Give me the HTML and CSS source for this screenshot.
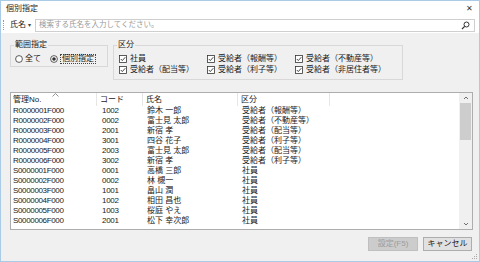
FILE: index.html
```html
<!doctype html>
<html>
<head>
    <meta charset="utf-8">
    <title>個別指定</title>
    <link rel="stylesheet" href="styles.css">
</head>

<body>

<div class="window">
    <div class="titlebar">
        <span class="title">個別指定</span>
        <span class="close">✕</span>
    </div>

    <div class="searchbar">
        <span class="grip"></span>
        <span class="field-select">氏名 <span class="caret">▾</span></span>
        <div class="search-box">
            <span class="placeholder">検索する氏名を入力してください。</span>
            <svg class="search-icon" width="9" height="9" viewBox="0 0 9 9">
                <circle cx="5.5" cy="3.5" r="2.5" fill="none" stroke="#333" stroke-width="1"/>
                <path d="M3.7 5.3 L1 8" stroke="#333" stroke-width="1.2"/>
            </svg>
        </div>
    </div>

    <div class="main">
        <div class="filters">
            <fieldset class="group range">
                <legend>範囲指定</legend>
                <div class="radios">
                    <span class="opt">
                        <svg width="8" height="8" viewBox="0 0 8 8"><circle cx="4" cy="4" r="3.4" fill="#fff" stroke="#333" stroke-width="0.8"/></svg>
                        全て
                    </span>
                    <span class="opt">
                        <svg width="8" height="8" viewBox="0 0 8 8"><circle cx="4" cy="4" r="3.4" fill="#fff" stroke="#333" stroke-width="0.8"/><circle cx="4" cy="4" r="1.8" fill="#333"/></svg>
                        <span class="focus">個別指定</span>
                    </span>
                </div>
            </fieldset>

            <fieldset class="group kubun">
                <legend>区分</legend>
                <div class="checks">
                    <span class="chk"><svg width="8" height="8" viewBox="0 0 8 8"><rect x="0.5" y="0.5" width="7" height="7" fill="#fff" stroke="#333" stroke-width="0.8"/><path d="M1.8 4 L3.3 5.6 L6.3 2.2" fill="none" stroke="#333" stroke-width="0.9"/></svg>社員</span>
                    <span class="chk"><svg width="8" height="8" viewBox="0 0 8 8"><rect x="0.5" y="0.5" width="7" height="7" fill="#fff" stroke="#333" stroke-width="0.8"/><path d="M1.8 4 L3.3 5.6 L6.3 2.2" fill="none" stroke="#333" stroke-width="0.9"/></svg>受給者（報酬等）</span>
                    <span class="chk"><svg width="8" height="8" viewBox="0 0 8 8"><rect x="0.5" y="0.5" width="7" height="7" fill="#fff" stroke="#333" stroke-width="0.8"/><path d="M1.8 4 L3.3 5.6 L6.3 2.2" fill="none" stroke="#333" stroke-width="0.9"/></svg>受給者（不動産等）</span>
                    <span class="chk"><svg width="8" height="8" viewBox="0 0 8 8"><rect x="0.5" y="0.5" width="7" height="7" fill="#fff" stroke="#333" stroke-width="0.8"/><path d="M1.8 4 L3.3 5.6 L6.3 2.2" fill="none" stroke="#333" stroke-width="0.9"/></svg>受給者（配当等）</span>
                    <span class="chk"><svg width="8" height="8" viewBox="0 0 8 8"><rect x="0.5" y="0.5" width="7" height="7" fill="#fff" stroke="#333" stroke-width="0.8"/><path d="M1.8 4 L3.3 5.6 L6.3 2.2" fill="none" stroke="#333" stroke-width="0.9"/></svg>受給者（利子等）</span>
                    <span class="chk"><svg width="8" height="8" viewBox="0 0 8 8"><rect x="0.5" y="0.5" width="7" height="7" fill="#fff" stroke="#333" stroke-width="0.8"/><path d="M1.8 4 L3.3 5.6 L6.3 2.2" fill="none" stroke="#333" stroke-width="0.9"/></svg>受給者（非居住者等）</span>
                </div>
            </fieldset>
        </div>

        <div class="list">
            <div class="grid">
                <div class="hd c1">管理No.<svg class="sort" width="7" height="4" viewBox="0 0 7 4"><path d="M0.5 3.5 L3.5 0.5 L6.5 3.5" fill="none" stroke="#777" stroke-width="0.8"/></svg></div>
                <div class="hd c2">コード</div>
                <div class="hd c3">氏名</div>
                <div class="hd c4">区分</div>
                <div class="hd c5"></div>

                <div class="cell code">R0000001F000</div><div class="cell num">1002</div><div class="cell">鈴木 一郎</div><div class="cell">受給者（報酬等）</div><div class="cell"></div>
                <div class="cell code">R0000002F000</div><div class="cell num">0002</div><div class="cell">富士見 太郎</div><div class="cell">受給者（不動産等）</div><div class="cell"></div>
                <div class="cell code">R0000003F000</div><div class="cell num">2001</div><div class="cell">新宿 孝</div><div class="cell">受給者（配当等）</div><div class="cell"></div>
                <div class="cell code">R0000004F000</div><div class="cell num">3001</div><div class="cell">四谷 花子</div><div class="cell">受給者（利子等）</div><div class="cell"></div>
                <div class="cell code">R0000005F000</div><div class="cell num">2003</div><div class="cell">富士見 太郎</div><div class="cell">受給者（配当等）</div><div class="cell"></div>
                <div class="cell code">R0000006F000</div><div class="cell num">3002</div><div class="cell">新宿 孝</div><div class="cell">受給者（利子等）</div><div class="cell"></div>
                <div class="cell code">S0000001F000</div><div class="cell num">0001</div><div class="cell">高橋 三郎</div><div class="cell">社員</div><div class="cell"></div>
                <div class="cell code">S0000002F000</div><div class="cell num">0002</div><div class="cell">林 槻一</div><div class="cell">社員</div><div class="cell"></div>
                <div class="cell code">S0000003F000</div><div class="cell num">1001</div><div class="cell">畠山 潤</div><div class="cell">社員</div><div class="cell"></div>
                <div class="cell code">S0000004F000</div><div class="cell num">1002</div><div class="cell">相田 昌也</div><div class="cell">社員</div><div class="cell"></div>
                <div class="cell code">S0000005F000</div><div class="cell num">1003</div><div class="cell">桜庭 やえ</div><div class="cell">社員</div><div class="cell"></div>
                <div class="cell code">S0000006F000</div><div class="cell num">2001</div><div class="cell">松下 幸次郎</div><div class="cell">社員</div><div class="cell"></div>
            </div>
            <div class="vscroll">
                <svg class="arrow" width="12" height="10" viewBox="0 0 12 10"><path d="M4 6 L6 4 L8 6" fill="none" stroke="#606060" stroke-width="0.9"/></svg>
                <div class="track"><div class="thumb"></div></div>
                <svg class="arrow" width="12" height="10" viewBox="0 0 12 10"><path d="M4 4 L6 6 L8 4" fill="none" stroke="#606060" stroke-width="0.9"/></svg>
            </div>
        </div>

        <div class="buttons">
            <span class="btn disabled">設定(F5)</span>
            <span class="btn">キャンセル</span>
        </div>
    </div>

    <svg class="size-grip" width="6" height="6" viewBox="0 0 6 6">
        <rect x="4" y="0" width="1" height="1" fill="#aaa"/>
        <rect x="2" y="2" width="1" height="1" fill="#aaa"/>
        <rect x="4" y="2" width="1" height="1" fill="#aaa"/>
        <rect x="0" y="4" width="1" height="1" fill="#aaa"/>
        <rect x="2" y="4" width="1" height="1" fill="#aaa"/>
        <rect x="4" y="4" width="1" height="1" fill="#aaa"/>
    </svg>
</div>

</body>
</html>
```

FILE: styles.css
```css
* {
    box-sizing: border-box;
}

body {
    margin: 0;
    font-family: "Liberation Sans", "Noto Sans CJK JP", sans-serif;
    font-size: 8px;
    color: #1a1a1a;
}

svg {
    flex-shrink: 0;
}

.window {
    position: relative;
    width: 480px;
    height: 262px;
    border: 1px solid #a9cbe6;
    background: #fff;
    display: flex;
    flex-direction: column;
}

.titlebar {
    height: 16px;
    display: flex;
    align-items: center;
    justify-content: space-between;
    padding: 0 6px 0 5px;
}

.title {
    line-height: 10px;
}

.close {
    font-size: 8px;
    color: #333;
    line-height: 10px;
}

.searchbar {
    height: 16px;
    display: flex;
    align-items: center;
    padding-left: 2px;
}

.grip {
    width: 1px;
    height: 10px;
    border-left: 1px dotted #999;
    margin-right: 6px;
}

.field-select {
    width: 25px;
    line-height: 10px;
}

.caret {
    font-size: 6px;
    color: #444;
}

.search-box {
    width: 440px;
    height: 13px;
    border: 1px solid #cfcfcf;
    background: #fff;
    display: flex;
    align-items: center;
    justify-content: space-between;
    padding: 0 4px 0 3px;
}

.placeholder {
    color: #9a9a9a;
    font-size: 7.5px;
    line-height: 10px;
}

.main {
    flex: 1;
    background: #f0f0f0;
    padding: 7px 6px 0 9px;
    display: flex;
    flex-direction: column;
}

.filters {
    display: flex;
    align-items: flex-start;
    gap: 5px;
}

.group {
    margin: 0;
    border: 1px solid #d8d8d8;
    padding: 0 4px;
}

.group legend {
    padding: 0 1px;
    line-height: 10px;
    margin-left: -1px;
}

.range {
    width: 98px;
    height: 27px;
}

.kubun {
    width: 290px;
    height: 40px;
}

.radios {
    display: flex;
    gap: 9px;
    margin-top: 4px;
}

.opt {
    display: flex;
    align-items: center;
    gap: 2px;
    line-height: 10px;
}

.focus {
    border: 1px dotted #444;
    padding: 0 1px;
    line-height: 8px;
}

.checks {
    display: grid;
    grid-template-columns: 88px 88px 88px;
    row-gap: 1px;
    margin-top: 4px;
    padding-left: 1px;
}

.chk {
    display: flex;
    align-items: center;
    gap: 3px;
    line-height: 10px;
    white-space: nowrap;
}

.list {
    margin-top: 12px;
    height: 138px;
    border: 1px solid #adadad;
    background: #fff;
    display: flex;
}

.grid {
    flex: 1;
    display: grid;
    grid-template-columns: 86px 46px 95px 92px 1fr;
    grid-template-rows: 13px;
    grid-auto-rows: 10px;
    align-content: start;
}

.hd {
    position: relative;
    line-height: 13px;
    padding-left: 3px;
    border-right: 1px solid #e6e6e6;
}

.hd.c1 {
    padding-left: 2px;
}

.hd.c5 {
    border-right: none;
}

.sort {
    position: absolute;
    left: 41px;
    top: 0;
}

.cell {
    line-height: 10px;
    padding-left: 4px;
    white-space: nowrap;
}

.cell.code {
    padding-left: 2px;
    letter-spacing: -0.35px;
}

.cell.num {
    padding-left: 5px;
    letter-spacing: -0.3px;
}

.vscroll {
    width: 13px;
    background: #f0f0f0;
    display: flex;
    flex-direction: column;
    align-items: center;
}

.track {
    flex: 1;
    width: 100%;
    padding: 0 1px;
}

.thumb {
    height: 37px;
    background: #cdcdcd;
}

.buttons {
    display: flex;
    justify-content: flex-end;
    gap: 5px;
    margin-top: 7px;
    padding-right: 1px;
}

.btn {
    height: 14px;
    line-height: 12px;
    border: 1px solid #adadad;
    background: #e1e1e1;
    text-align: center;
    width: 49px;
}

.btn.disabled {
    width: 50px;
    border-color: #bfbfbf;
    background: #cccccc;
    color: #9d9d9d;
}

.size-grip {
    position: absolute;
    right: 1px;
    bottom: 1px;
}
```
